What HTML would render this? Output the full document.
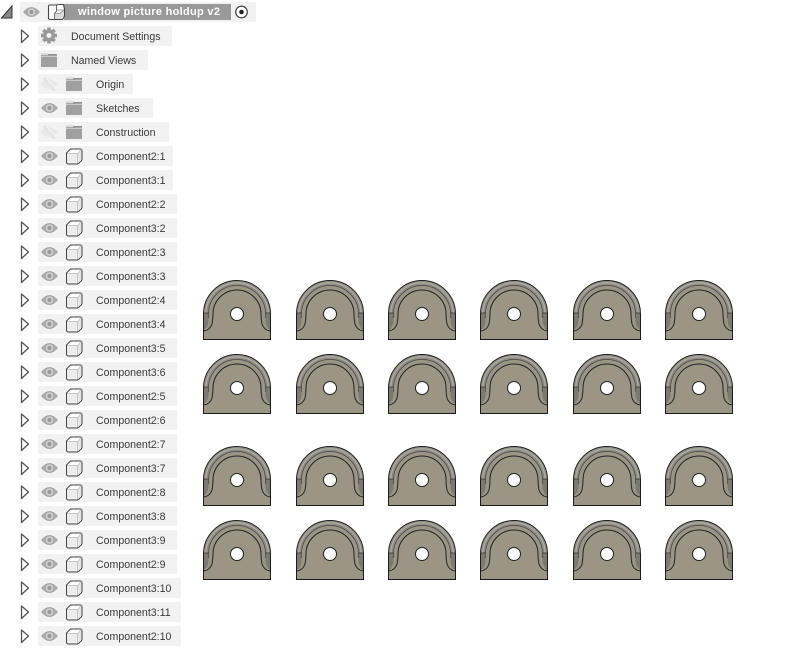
<!DOCTYPE html>
<html><head><meta charset="utf-8"><style>
html,body{margin:0;padding:0;background:#fff}
body{position:relative;width:801px;height:648px;overflow:hidden;font-family:"Liberation Sans",Arial,sans-serif}
.r{position:absolute;left:38px;height:20px;background:#f2f2f2}
.t{position:absolute;font-size:10.6px;line-height:20px;margin-top:1px;color:#383838;white-space:nowrap}
svg.o{position:absolute;left:0;top:0}
</style></head><body>
<div class="r" style="left:20px;top:2px;width:236px"></div>
<div style="position:absolute;left:64px;top:4px;width:167px;height:16px;background:#999"></div>
<div class="t" style="left:78px;top:1px;color:#fff;font-weight:bold;font-size:11px;letter-spacing:.3px">window picture holdup v2</div>
<div class="r" style="top:26px;width:134px"></div><div class="t" style="left:71px;top:26px">Document Settings</div>
<div class="r" style="top:50px;width:110px"></div><div class="t" style="left:71px;top:50px">Named Views</div>
<div class="r" style="top:74px;width:95px"></div><div class="t" style="left:96px;top:74px">Origin</div>
<div class="r" style="top:98px;width:115px"></div><div class="t" style="left:96px;top:98px">Sketches</div>
<div class="r" style="top:122px;width:131px"></div><div class="t" style="left:96px;top:122px">Construction</div>
<div class="r" style="top:146px;width:135px"></div><div class="t" style="left:96px;top:146px">Component2:1</div>
<div class="r" style="top:170px;width:135px"></div><div class="t" style="left:96px;top:170px">Component3:1</div>
<div class="r" style="top:194px;width:139px"></div><div class="t" style="left:96px;top:194px">Component2:2</div>
<div class="r" style="top:218px;width:139px"></div><div class="t" style="left:96px;top:218px">Component3:2</div>
<div class="r" style="top:242px;width:139px"></div><div class="t" style="left:96px;top:242px">Component2:3</div>
<div class="r" style="top:266px;width:139px"></div><div class="t" style="left:96px;top:266px">Component3:3</div>
<div class="r" style="top:290px;width:139px"></div><div class="t" style="left:96px;top:290px">Component2:4</div>
<div class="r" style="top:314px;width:139px"></div><div class="t" style="left:96px;top:314px">Component3:4</div>
<div class="r" style="top:338px;width:139px"></div><div class="t" style="left:96px;top:338px">Component3:5</div>
<div class="r" style="top:362px;width:139px"></div><div class="t" style="left:96px;top:362px">Component3:6</div>
<div class="r" style="top:386px;width:139px"></div><div class="t" style="left:96px;top:386px">Component2:5</div>
<div class="r" style="top:410px;width:139px"></div><div class="t" style="left:96px;top:410px">Component2:6</div>
<div class="r" style="top:434px;width:139px"></div><div class="t" style="left:96px;top:434px">Component2:7</div>
<div class="r" style="top:458px;width:139px"></div><div class="t" style="left:96px;top:458px">Component3:7</div>
<div class="r" style="top:482px;width:139px"></div><div class="t" style="left:96px;top:482px">Component2:8</div>
<div class="r" style="top:506px;width:139px"></div><div class="t" style="left:96px;top:506px">Component3:8</div>
<div class="r" style="top:530px;width:139px"></div><div class="t" style="left:96px;top:530px">Component3:9</div>
<div class="r" style="top:554px;width:139px"></div><div class="t" style="left:96px;top:554px">Component2:9</div>
<div class="r" style="top:578px;width:143px"></div><div class="t" style="left:96px;top:578px">Component3:10</div>
<div class="r" style="top:602px;width:143px"></div><div class="t" style="left:96px;top:602px">Component3:11</div>
<div class="r" style="top:626px;width:143px"></div><div class="t" style="left:96px;top:626px">Component2:10</div>

<svg class="o" width="801" height="648" viewBox="0 0 801 648">
<defs>
<g id="tri"><path d="M-3.500 -6 L3.500 0 L-3.500 6.500 Z" fill="#fff" stroke="#555" stroke-width="1.300" stroke-linejoin="round"/></g>
<g id="eye"><path d="M-8.500 0 Q0 -10 8.500 0 Q0 10 -8.500 0Z" fill="#aaa"/><circle r="3.600" fill="#d4d4d4"/><circle r="2.200" fill="#999"/></g>
<g id="noeye"><path d="M-8.500 0 Q0 -10 8.500 0 Q0 10 -8.500 0Z" fill="#e8e8e8"/><path d="M-5.500 -6.500 L6 6.500" stroke="#e4e4e4" stroke-width="3" fill="none"/><path d="M-3.500 -6.500 L7 5" stroke="#f2f2f2" stroke-width="1.200" fill="none"/></g>
<g id="fold"><path d="M-8 -3.500 H8 V7 H-8Z" fill="#a0a0a0"/><path d="M-1 -6 H8 V-4.200 H-1Z" fill="#909090"/><path d="M-8 -7 H-1 V-5 H-8Z" fill="#dcdcdc"/><path d="M-8 -5 H-1 V-4 H-8Z" fill="#a8a8a8"/></g>
<g id="box"><path d="M-7.500 -3 L-3.500 -7 H6 Q8 -7 8 -5 V3 Q8 4.500 6 6 Q4.500 8 3 8 H-5.500 Q-7.500 8 -7.500 6Z" fill="#fff" stroke="#444" stroke-width="1"/><path d="M-7 -2.500 H3.500 V7.500 H-5.500 Q-7 7.500 -7 6Z" fill="#ededf0"/><path d="M3.500 -2.500 L7.500 -6.500 V3 L3.500 7.500Z" fill="#e6e6e6"/><path d="M-7 -2.500 H3.500 V7.500 M3.500 -2.500 L7.500 -6.500" fill="none" stroke="#bbb" stroke-width=".8"/></g>
<g id="b">
<path d="M.5 59.500 V34 A33.500 33.500 0 0 1 67.500 34 V59.500Z" fill="#9b9585" stroke="#1c1c1c" stroke-width="1"/>
<path d="M1 34 A33 33 0 0 1 67 34 H62.500 A28.500 28.500 0 0 0 5.500 34Z" fill="#8c8a83"/>
<path d="M2.800 34 A31.200 31.200 0 0 1 65.200 34" fill="none" stroke="#aeaba3" stroke-width="1.300"/>
<path d="M1 33 H5.500 V41 Q5.500 46 1 50Z M67 33 H62.500 V41 Q62.500 46 67 50Z" fill="#7b7972"/>
<path d="M5.500 38 V34 A28.500 28.500 0 0 1 62.500 34 V38" fill="none" stroke="#444" stroke-width=".7"/>
<path d="M1 51 Q7 50 9 44 Q10 39 10 34 A24 24 0 0 1 58 34 Q58 39 59 44 Q61 50 67 51" fill="none" stroke="#222" stroke-width="1"/>
<path d="M1 33 H5.500 M67 33 H62.500" stroke="#333" stroke-width=".7" fill="none"/>
<circle cx="34" cy="34" r="6.500" fill="#fff" stroke="#222" stroke-width="1"/>
</g>
</defs>

<path d="M1.500 18 L12 6 V18Z" fill="#888" stroke="#333" stroke-width="1"/>
<use href="#eye" x="31.500" y="12"/>
<g transform="translate(56,12)"><path d="M-7.500 -5.500 Q-7.500 -7 -6 -7 H0 L3 -7.500 H7.500 L8.500 -3 V4 L6.500 7.500 H-6 Q-7.500 7.500 -7.500 6Z" fill="#fff" stroke="#444" stroke-width="1.100"/><path d="M-1 2 H4 L8 -2 V4 L5 7 H-1Z" fill="#dcdcdc"/><path d="M0.500 -7 V-1 L-1.500 1.500 V7.500" stroke="#666" stroke-width="1" fill="none"/><path d="M1 -2 H8 M-1.500 1.500 H4 L8 -2" stroke="#888" stroke-width=".8" fill="none"/></g>
<circle cx="241.500" cy="12" r="5.800" fill="#fff" stroke="#333" stroke-width="1.100"/><circle cx="241.500" cy="12" r="2.300" fill="#222"/>

<g transform="translate(49,35.500)" fill="#999"><rect x="-1.800" y="-8" width="3.600" height="16"/><rect x="-1.800" y="-8" width="3.600" height="16" transform="rotate(45)"/><rect x="-1.800" y="-8" width="3.600" height="16" transform="rotate(90)"/><rect x="-1.800" y="-8" width="3.600" height="16" transform="rotate(135)"/><circle r="6"/><circle r="2.500" fill="#f2f2f2"/></g>
<use href="#fold" x="49" y="60"/>
<use href="#noeye" x="49" y="84"/><use href="#fold" x="74" y="84"/>
<use href="#eye" x="49.500" y="108"/><use href="#fold" x="74" y="108"/>
<use href="#noeye" x="49" y="132"/><use href="#fold" x="74" y="132"/>

<use href="#tri" x="25" y="36"/><use href="#tri" x="25" y="60"/><use href="#tri" x="25" y="84"/><use href="#tri" x="25" y="108"/><use href="#tri" x="25" y="132"/><use href="#tri" x="25" y="156"/><use href="#tri" x="25" y="180"/><use href="#tri" x="25" y="204"/><use href="#tri" x="25" y="228"/><use href="#tri" x="25" y="252"/><use href="#tri" x="25" y="276"/><use href="#tri" x="25" y="300"/><use href="#tri" x="25" y="324"/><use href="#tri" x="25" y="348"/><use href="#tri" x="25" y="372"/><use href="#tri" x="25" y="396"/><use href="#tri" x="25" y="420"/><use href="#tri" x="25" y="444"/><use href="#tri" x="25" y="468"/><use href="#tri" x="25" y="492"/><use href="#tri" x="25" y="516"/><use href="#tri" x="25" y="540"/><use href="#tri" x="25" y="564"/><use href="#tri" x="25" y="588"/><use href="#tri" x="25" y="612"/><use href="#tri" x="25" y="636"/>

<use href="#eye" x="49.500" y="156"/><use href="#eye" x="49.500" y="180"/><use href="#eye" x="49.500" y="204"/><use href="#eye" x="49.500" y="228"/><use href="#eye" x="49.500" y="252"/><use href="#eye" x="49.500" y="276"/><use href="#eye" x="49.500" y="300"/><use href="#eye" x="49.500" y="324"/><use href="#eye" x="49.500" y="348"/><use href="#eye" x="49.500" y="372"/><use href="#eye" x="49.500" y="396"/><use href="#eye" x="49.500" y="420"/><use href="#eye" x="49.500" y="444"/><use href="#eye" x="49.500" y="468"/><use href="#eye" x="49.500" y="492"/><use href="#eye" x="49.500" y="516"/><use href="#eye" x="49.500" y="540"/><use href="#eye" x="49.500" y="564"/><use href="#eye" x="49.500" y="588"/><use href="#eye" x="49.500" y="612"/><use href="#eye" x="49.500" y="636"/>

<use href="#box" x="74" y="156"/><use href="#box" x="74" y="180"/><use href="#box" x="74" y="204"/><use href="#box" x="74" y="228"/><use href="#box" x="74" y="252"/><use href="#box" x="74" y="276"/><use href="#box" x="74" y="300"/><use href="#box" x="74" y="324"/><use href="#box" x="74" y="348"/><use href="#box" x="74" y="372"/><use href="#box" x="74" y="396"/><use href="#box" x="74" y="420"/><use href="#box" x="74" y="444"/><use href="#box" x="74" y="468"/><use href="#box" x="74" y="492"/><use href="#box" x="74" y="516"/><use href="#box" x="74" y="540"/><use href="#box" x="74" y="564"/><use href="#box" x="74" y="588"/><use href="#box" x="74" y="612"/><use href="#box" x="74" y="636"/>

<use href="#b" x="203" y="280"/><use href="#b" x="296" y="280"/><use href="#b" x="388" y="280"/><use href="#b" x="480" y="280"/><use href="#b" x="573" y="280"/><use href="#b" x="665" y="280"/>
<use href="#b" x="203" y="354"/><use href="#b" x="296" y="354"/><use href="#b" x="388" y="354"/><use href="#b" x="480" y="354"/><use href="#b" x="573" y="354"/><use href="#b" x="665" y="354"/>
<use href="#b" x="203" y="446"/><use href="#b" x="296" y="446"/><use href="#b" x="388" y="446"/><use href="#b" x="480" y="446"/><use href="#b" x="573" y="446"/><use href="#b" x="665" y="446"/>
<use href="#b" x="203" y="520"/><use href="#b" x="296" y="520"/><use href="#b" x="388" y="520"/><use href="#b" x="480" y="520"/><use href="#b" x="573" y="520"/><use href="#b" x="665" y="520"/>
</svg>
</body></html>
